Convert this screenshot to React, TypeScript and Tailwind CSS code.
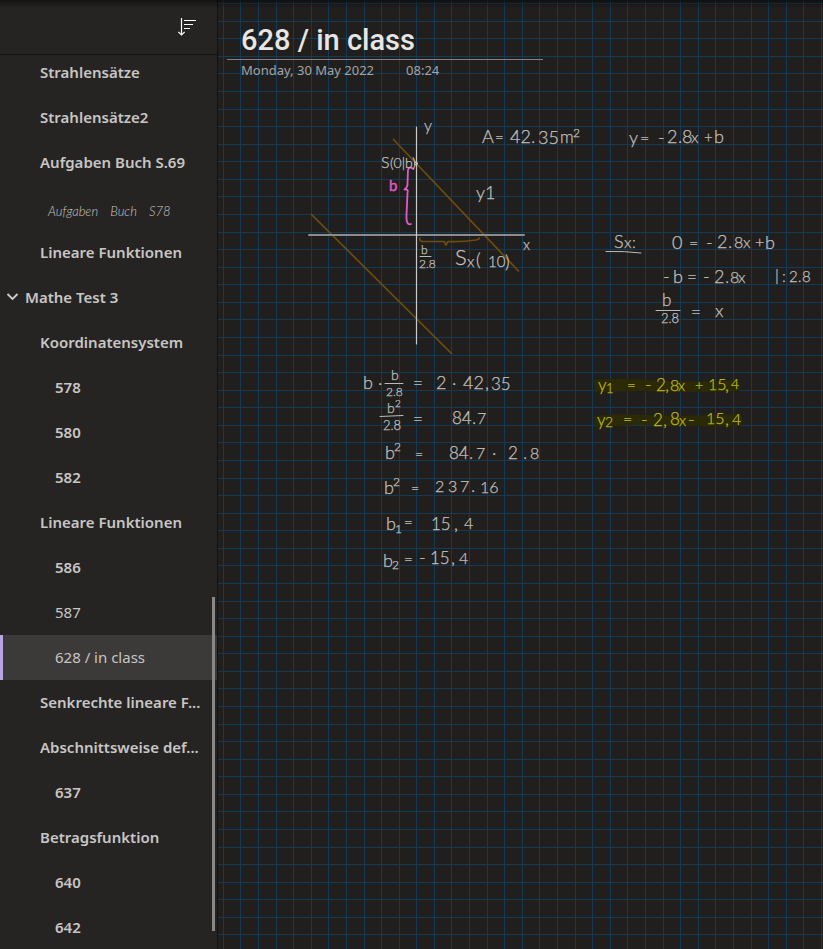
import React from "react";

type Page = {
  title: string;
  level: 0 | 1 | 2;
  read?: boolean;
  selected?: boolean;
  expanded?: boolean;
  ink?: boolean;
};

const pages: Page[] = [
  { title: "Strahlensätze", level: 1 },
  { title: "Strahlensätze2", level: 1 },
  { title: "Aufgaben Buch S.69", level: 1 },
  { title: "Aufgaben Buch S78", level: 1, ink: true },
  { title: "Lineare Funktionen", level: 1 },
  { title: "Mathe Test 3", level: 0, expanded: true },
  { title: "Koordinatensystem", level: 1 },
  { title: "578", level: 2 },
  { title: "580", level: 2 },
  { title: "582", level: 2 },
  { title: "Lineare Funktionen", level: 1 },
  { title: "586", level: 2 },
  { title: "587", level: 2, read: true },
  { title: "628 / in class", level: 2, read: true, selected: true },
  { title: "Senkrechte lineare F...", level: 1 },
  { title: "Abschnittsweise def...", level: 1 },
  { title: "637", level: 2 },
  { title: "Betragsfunktion", level: 1 },
  { title: "640", level: 2 },
  { title: "642", level: 2 },
];

const indent = { 0: "pl-[6px]", 1: "pl-10", 2: "pl-[55px]" };

function PageRow({ page }: { page: Page }) {
  const weight = page.read ? "font-normal" : "font-semibold";
  const surface = page.selected ? "bg-[#3b3a39]" : "";
  return (
    <li className="relative shrink-0">
      {page.selected && <span className="absolute inset-y-0 left-0 w-[3px] bg-[#b9a5df]" />}
      <a
        href="#"
        aria-current={page.selected ? "page" : undefined}
        className={`flex h-[45px] items-center pr-2 pb-[2px] text-[15px] leading-5 text-[#c8c6c4] ${indent[page.level]} ${weight} ${surface}`}
      >
        {page.expanded && (
          <svg className="mr-[6px] h-[13px] w-[13px] shrink-0" viewBox="0 0 13 13" fill="none" stroke="#d0cecc" strokeWidth="1.8">
            <path d="M1.5 4 6.5 9 11.5 4" />
          </svg>
        )}
        {page.ink ? (
          <span className="flex gap-3 pt-2 pl-2 font-['Lato'] text-[13px] font-light italic">
            {page.title.split(" ").map((word) => (
              <span key={word}>{word}</span>
            ))}
          </span>
        ) : (
          <span className="whitespace-nowrap">{page.title}</span>
        )}
      </a>
    </li>
  );
}

function Sidebar() {
  return (
    <aside className="relative flex w-[218px] shrink-0 flex-col border-r border-[#121110] bg-[#252423]">
      <div className="flex h-[55px] shrink-0 items-center justify-end border-b border-[#121110] pr-5">
        <button type="button" aria-label="Sort pages" className="h-5 w-5">
          <svg viewBox="0 0 20 20" className="h-5 w-5" fill="none" stroke="#ffffff" strokeWidth="1.2">
            <path d="M4.5 1V18M1.3 14.8 4.5 18 7.7 14.8" />
            <path d="M7 3.5H19M7 7.5H16M7 11.5H13" />
          </svg>
        </button>
      </div>
      <nav aria-label="Pages" className="min-h-0 flex-1 overflow-hidden">
        <ul className="-mt-[5px] flex flex-col">
          {pages.map((page, i) => (
            <PageRow key={i} page={page} />
          ))}
        </ul>
      </nav>
      <span className="absolute right-[2px] bottom-[18px] h-[334px] w-[3px] bg-[#8a8886]" />
    </aside>
  );
}

const STEP_X = 17.59;
const STEP_Y = 17.573;
const steps = Array.from({ length: 140 }, (_, i) => i);

function GridPaper() {
  return (
    <svg aria-hidden="true" className="absolute inset-0 h-full w-full" shapeRendering="crispEdges" fill="#143a55">
      {steps.map((i) => (
        <rect key={`v${i}`} x={Math.floor(5.3 + i * STEP_X)} y="0" width="1" height="100%" />
      ))}
      {steps.map((i) => (
        <rect key={`h${i}`} x="0" y={Math.floor(3.6 + i * STEP_Y)} width="100%" height="1" />
      ))}
    </svg>
  );
}

// A run of ink: [x, baseline, text, size]
type Run = [number, number, string, number?];

const notes: Run[][] = [
  [[424, 131, "y", 16]],
  [[381, 168, "S", 16], [390, 168, "(0|b)", 14]],
  [[476, 199, "y", 18], [485, 199, "1", 18]],
  [[523, 250, "x", 15]],
  [[482, 143, "A"], [495, 143, "=", 15], [510, 143, "42"], [531, 143, "."], [538, 144, "35"], [560, 143, "m", 17], [573, 137, "2", 12]],
  [[629, 144, "y"], [640, 144, "=", 16], [658, 144, "-"], [667, 143, "2"], [678, 143, "."], [682, 143, "8"], [691, 143, "x", 16], [704, 143, "+", 15], [714, 143, "b"]],
  [[421, 254, "b", 12]],
  [[419, 268, "2.8", 12]],
  [[455, 265, "S", 22], [467, 267, "x", 16], [476, 266, "("], [488, 267, "10", 15], [505, 268, ")"]],
  [[614, 248, "S"], [624, 248, "x", 16], [632, 248, ":", 16]],
  [[672, 249, "0"], [689, 249, "=", 16], [706, 249, "-"], [717, 248, "2"], [728, 248, "."], [734, 248, "8", 16], [743, 248, "x", 16], [755, 248, "+", 16], [765, 249, "b"]],
  [[663, 283, "-"], [673, 283, "b"], [687, 283, "=", 17], [703, 283, "-"], [714, 283, "2"], [725, 283, "."], [730, 283, "8", 16], [738, 283, "x", 16], [775, 281, "|", 16], [782, 282, ":", 16], [789, 282, "2", 15], [798, 282, ".", 15], [802, 282, "8", 15]],
  [[662, 306, "b", 17]],
  [[661, 323, "2.8", 13], [691, 318, "=", 17], [715, 317, "x"]],
  [[363, 389, "b"], [378, 389, "·"], [391, 380, "b", 14]],
  [[386, 396, "2.8", 12], [413, 389, "=", 17], [436, 389, "2"], [452, 389, "·"], [463, 389, "42"], [485, 389, ","], [491, 390, "35", 17]],
  [[387, 413, "b", 14], [395, 407, "2", 10]],
  [[383, 430, "2.8", 13], [413, 425, "=", 17], [452, 424, "84", 17], [472, 424, "."], [477, 424, "7", 16]],
  [[385, 459, "b"], [394, 451, "2", 12], [415, 459, "=", 14], [449, 459, "84", 17], [469, 459, "."], [476, 459, "7", 16], [492, 459, "·"], [508, 459, "2", 17], [523, 459, "."], [530, 459, "8", 16]],
  [[384, 494, "b"], [393, 486, "2", 12], [411, 493, "=", 14], [435, 492, "2", 16], [448, 492, "3", 16], [460, 492, "7", 16], [471, 492, "."], [480, 493, "16", 16]],
  [[386, 530, "b"], [395, 533, "1", 12], [404, 528, "=", 15], [431, 530, "15", 17], [454, 530, ","], [464, 529, "4", 16]],
  [[383, 567, "b"], [392, 569, "2", 12], [404, 565, "=", 15], [419, 564, "-"], [430, 564, "15", 17], [451, 564, ","], [459, 564, "4", 16]],
];

const results: Run[][] = [
  [[598, 391, "y", 17], [606, 393, "1", 13], [627, 391, "=", 15], [645, 391, "-"], [656, 391, "2", 17], [665, 391, ","], [670, 391, "8", 16], [678, 391, "x", 15], [695, 390, "+", 14], [708, 390, "15", 16], [725, 391, ","], [731, 389, "4", 14]],
  [[597, 426, "y", 17], [605, 427, "2", 14], [623, 425, "=", 16], [641, 426, "-"], [653, 426, "2", 17], [663, 426, ","], [670, 425, "8", 17], [679, 426, "x", 15], [688, 426, "-"], [706, 424, "15", 16], [725, 425, ","], [732, 425, "4", 16]],
];

function InkLine({ runs, color }: { runs: Run[]; color: string }) {
  return (
    <text fill={color} stroke={color} strokeWidth="0.25">
      {runs.map(([x, y, text, size = 18], i) => (
        <tspan key={i} x={x} y={y} fontSize={size}>
          {text}
        </tspan>
      ))}
    </text>
  );
}

function Ink() {
  return (
    <svg
      viewBox="218 100 605 480"
      className="relative block h-[480px] w-[605px] max-w-none font-['Lato','Noto_Sans',sans-serif] font-light"
      fill="none"
      strokeLinecap="round"
      strokeLinejoin="round"
    >
      <g fill="#2c2a06">
        <path d="M594 380 Q620 378 646 380 Q690 383 738 380 L740 391 Q690 393 640 391 L595 392Z" />
        <path d="M594 416 Q620 413 646 415 Q690 417 741 414 L742 426 Q690 427 640 425 L595 427Z" />
      </g>
      <g stroke="#6d4c0c" strokeWidth="1.7">
        <path d="M393.500 139.500 518.500 271" />
        <path d="M311.500 214.500 451.500 353.500" />
        <path d="M420 238 Q419 242 424 241.500 L444 241.500 L446 245 448 241.500 Q463 242 476 240 Q480 239 479 238" />
      </g>
      <path d="M309 235H524" stroke="#8f8b8d" strokeWidth="2" />
      <path d="M416.500 127V344" stroke="#c9c9c9" strokeWidth="1.2" />
      <circle cx="416" cy="163.500" r="1.500" stroke="#c9c9c9" />
      <path d="M413 168.500 Q409 166 408 170 L407.500 183 Q408 187 404.500 189.500 Q409 189 407.500 193 L406.500 215 Q406 226 411 224" stroke="#e05acb" strokeWidth="1.8" />
      <text x="389" y="191" fontSize="15" fill="#e05acb" stroke="#e05acb" strokeWidth="0.4" className="font-normal">b</text>
      <g stroke="#bdbbb9" strokeWidth="1">
        <path d="M420 256.500H431" />
        <path d="M606 251.500Q625 251 641 253" />
        <path d="M656 310.500H680" />
        <path d="M385 383.500H403" />
        <path d="M380 416.500 403 415.500" />
      </g>
      {notes.map((runs, i) => (
        <InkLine key={i} runs={runs} color="#c2c0be" />
      ))}
      {results.map((runs, i) => (
        <InkLine key={i} runs={runs} color="#bdba14" />
      ))}
    </svg>
  );
}

export default function App() {
  return (
    <div className="relative flex h-screen min-h-[600px] overflow-hidden bg-[#211f1e] font-['Noto_Sans','Open_Sans',sans-serif]">
      <Sidebar />
      <main className="relative min-w-0 flex-1 overflow-hidden">
        <GridPaper />
        <header className="relative h-[100px] pt-5 pl-[9px]">
          <h1 className="h-10 w-[316px] border-b border-[#83817f] pl-[14px] font-['Roboto',sans-serif] text-[29px] leading-10 font-medium text-[#e8e6e4]">
            628 / in class
          </h1>
          <p className="flex gap-8 pt-px pl-[14px] text-[13px] leading-[18px] text-[#a5a3a1]">
            <span>Monday, 30 May 2022</span>
            <time>08:24</time>
          </p>
        </header>
        <Ink />
      </main>
      <div className="pointer-events-none absolute inset-x-0 top-0 h-2 bg-linear-to-b from-black/50 to-transparent" />
    </div>
  );
}
